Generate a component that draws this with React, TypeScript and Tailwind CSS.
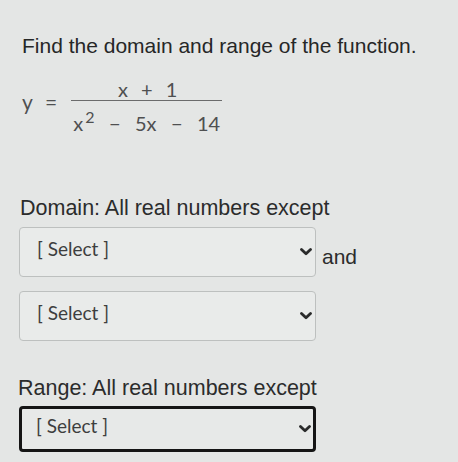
import React from "react";

function Chevron() {
  return (
    <svg width="12" height="8" viewBox="0 0 12 8" className="shrink-0">
      <path d="M1.5 1.5 L6 5.8 L10.5 1.5" fill="none" stroke="#2a2b2b" strokeWidth="2.8" strokeLinecap="round" strokeLinejoin="round" />
    </svg>
  );
}

function SelectBox({ focused = false, className = "" }: { focused?: boolean; className?: string }) {
  return (
    <button
      type="button"
      className={
        "w-[297px] flex items-center justify-between rounded-[4px] text-left " +
        (focused
          ? "h-[46px] border-[3px] border-[#151515] bg-[#e7e9e8] pl-[14px] pr-[2px] "
          : "h-[50px] border border-[#bdc0bf] bg-[#e9ebea] pl-[17px] pr-[3px] ") +
        className
      }
    >
      <span className="text-[19px] leading-[20px] text-[#3d3e3e] -mt-[6px]" style={{ fontFamily: "Lato, 'Noto Sans', sans-serif" }}>
        [ Select ]
      </span>
      <Chevron />
    </button>
  );
}

export default function App() {
  return (
    <main
      className="min-h-screen bg-[#e4e6e5] pl-[19px] pt-[34px] text-[#2b2c2c]"
      style={{ fontFamily: "'Liberation Sans', Arial, sans-serif" }}
    >
      <h1 className="ml-[3px] text-[21px] leading-[24px] text-[#262727]">
        Find the domain and range of the function.
      </h1>

      {/* equation */}
      <div className="mt-[22px] h-[52px] ml-[3px] flex items-start text-[20px] leading-[19px] text-[#4f5051]" style={{ fontFamily: "Lato, 'Noto Sans', sans-serif" }}>
        <div className="mt-[12px] flex text-[21px]">
          <span className="w-[23px]">y</span>
          <span>=</span>
        </div>
        <div className="ml-[14px] w-[151px] flex flex-col">
          <div className="h-[21px] border-b border-[#6b6c6c] flex justify-center gap-[13px] pl-[2px]">
            <span>x</span>
            <span>+</span>
            <span>1</span>
          </div>
          <div className="pt-[13px] flex justify-between px-[2px]">
            <span>
              x<span className="relative -top-[8px] ml-[2px] text-[16px]">2</span>
            </span>
            <span>−</span>
            <span>5x</span>
            <span>−</span>
            <span>14</span>
          </div>
        </div>
      </div>

      <p className="mt-[64px] ml-[1px] text-[21.5px] leading-[25px]">Domain: All real numbers except</p>

      <div className="mt-[6px] flex items-center">
        <SelectBox />
        <span className="ml-[6px] mt-[10px] text-[21px] leading-[24px]">and</span>
      </div>

      <SelectBox className="mt-[14px]" />

      <p className="mt-[35px] -ml-[1px] text-[21.5px] leading-[25px]">Range: All real numbers except</p>

      <SelectBox focused className="mt-[5px]" />
    </main>
  );
}
